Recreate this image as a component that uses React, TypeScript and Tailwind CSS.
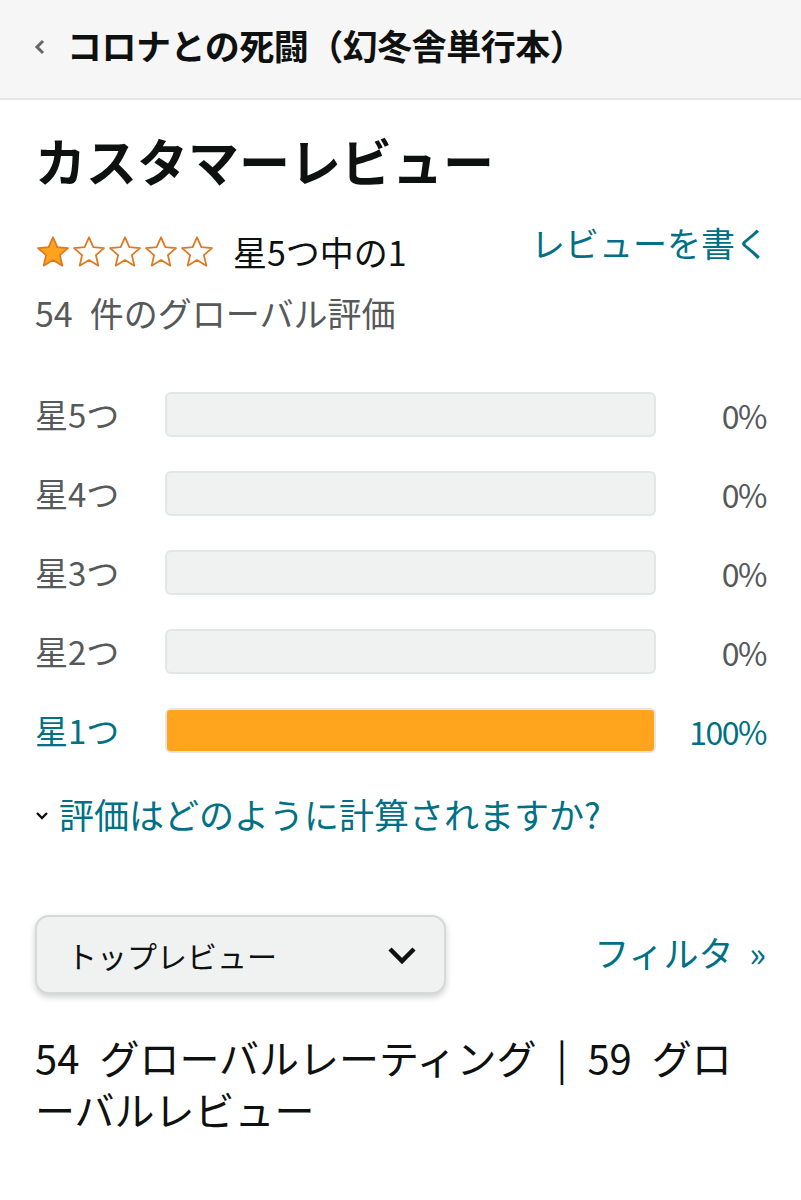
import React from "react";

const font = { fontFamily: '"Noto Sans CJK JP", "Noto Sans", sans-serif' };

function Star({ filled }: { filled: boolean }) {
  return (
    <svg width="36" height="36" viewBox="0 0 24 24">
      <path
        d="M12 2.2l2.9 6.6 7.1.6-5.4 4.7 1.6 7-6.2-3.7-6.2 3.7 1.6-7L2 9.4l7.1-.6z"
        fill={filled ? "#ffa41c" : "#ffffff"}
        stroke="#de7921"
        strokeWidth="1.2"
        strokeLinejoin="round"
      />
    </svg>
  );
}

const rows = [
  { label: "星5つ", pct: 0 },
  { label: "星4つ", pct: 0 },
  { label: "星3つ", pct: 0 },
  { label: "星2つ", pct: 0 },
  { label: "星1つ", pct: 100 },
];

export default function App() {
  return (
    <div className="w-[801px] h-[1200px] bg-white text-[#0f1111]" style={font}>
      <div className="h-[100px] bg-[#f6f6f6] border-b-2 border-[#e7e7e7] flex items-center pl-[33px]">
        <svg width="14" height="18" viewBox="0 0 14 18" className="mr-[20px] mt-[-4px]">
          <path d="M10 3L4 9l6 6" fill="none" stroke="#666" strokeWidth="3" />
        </svg>
        <span className="text-[35px] font-bold tracking-[-0.5px] mt-[-8px]">コロナとの死闘（幻冬舎単行本）</span>
      </div>

      <div className="px-[35px]">
        <h1 className="text-[51px] font-bold leading-none mt-[35px]">カスタマーレビュー</h1>

        <div className="flex justify-between items-start mt-[40px]">
          <div className="flex items-center mt-[8px]">
            <div className="flex">
              {[0, 1, 2, 3, 4].map((i) => (
                <Star key={i} filled={i === 0} />
              ))}
            </div>
            <span className="text-[34px] leading-none ml-[18px]">星5つ中の1</span>
          </div>
          <span className="text-[34px] leading-none text-[#007185] mr-[-3px]">レビューを書く</span>
        </div>

        <div className="text-[34px] leading-none text-[#565959] mt-[26px]">
          {"54\u2002件のグローバル評価"}
        </div>

        <div className="mt-[62px] flex flex-col gap-[34px]">
          {rows.map((r) => {
            const active = r.pct > 0;
            return (
              <div key={r.label} className="flex items-center h-[45px]">
                <span className={`w-[130px] text-[33px] leading-none ${active ? "text-[#007185]" : "text-[#565959]"}`}>
                  {r.label}
                </span>
                <div className="w-[491px] h-[45px] rounded-[6px] bg-[#f0f2f2] border-2 border-[#e3e6e6] overflow-hidden">
                  {active && (
                    <div className="h-full bg-[#ffa41c] border-2 border-[#e08a1e] rounded-[6px] m-[-2px] box-content" style={{ width: `${r.pct}%` }} />
                  )}
                </div>
                <span className={`flex-1 text-right text-[32px] leading-none tracking-[-1.5px] ${active ? "text-[#007185]" : "text-[#565959]"}`}>
                  {r.pct}%
                </span>
              </div>
            );
          })}
        </div>

        <div className="flex items-center mt-[43px] text-[#007185]">
          <svg width="14" height="12" viewBox="0 0 14 12" className="mr-[10px] mt-[4px]">
            <path d="M2 3l5 5 5-5" fill="none" stroke="#0f1111" strokeWidth="2.4" />
          </svg>
          <span className="text-[35px] leading-none">評価はどのように計算されますか?</span>
        </div>

        <div className="flex items-center justify-between mt-[84px]">
          <div className="w-[411px] h-[79px] rounded-[14px] bg-[#f0f2f2] border-2 border-[#d5d9d9] shadow-[0_3px_6px_rgba(15,17,17,0.2)] flex items-center justify-between pl-[30px] pr-[26px]">
            <span className="text-[30px] leading-none">トップレビュー</span>
            <svg width="32" height="22" viewBox="0 0 32 22">
              <path d="M4 5l12 12L28 5" fill="none" stroke="#0f1111" strokeWidth="4.5" />
            </svg>
          </div>
          <span className="text-[35px] leading-none text-[#007185] mt-[-6px] whitespace-pre">
            {"フィルタ  »"}
          </span>
        </div>

        <p className="mt-[37px] text-[40px] leading-[52px] [line-break:loose]">
          {"54\u2002グローバルレーティング\u2002|\u200259\u2002グローバルレビュー"}
        </p>
      </div>
    </div>
  );
}
